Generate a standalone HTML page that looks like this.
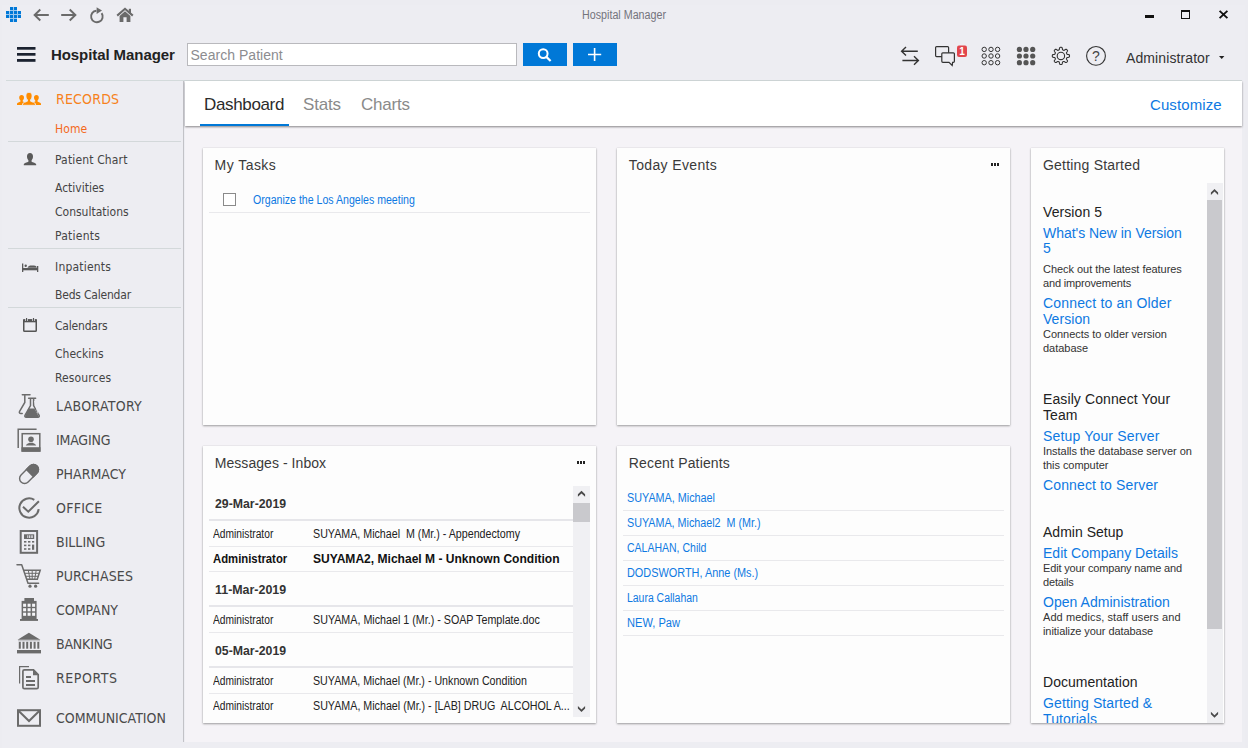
<!DOCTYPE html>
<html><head><meta charset="utf-8"><title>Hospital Manager</title>
<style>
*{box-sizing:border-box;margin:0;padding:0}
html,body{width:1248px;height:748px;overflow:hidden}
body{position:relative;background:#ececf1;font-family:"Liberation Sans",sans-serif;color:#333;font-size:12px}
.abs{position:absolute}
#win{position:absolute;left:2px;top:5px;width:1243px;height:743px;background:#ededf2}
.cap{position:absolute;left:0;width:1248px;top:8px;text-align:center;font-size:12px;color:#777;line-height:14px;letter-spacing:-0.35px}
svg{position:absolute;left:0;top:0;overflow:visible}
#brand{position:absolute;left:51px;top:46px;font-weight:bold;font-size:15px;letter-spacing:-0.08px;line-height:18px;color:#222;white-space:nowrap}
#search{position:absolute;left:187px;top:43px;width:330px;height:23px;border:1px solid #b9b9bd;background:#fff;font-size:14px;line-height:22px;color:#8c8c90;padding-left:2.5px;letter-spacing:.03px}
.btn{position:absolute;top:43px;width:44px;height:23px;background:#0078d7}
#admin{position:absolute;left:1126px;top:49px;font-size:14px;line-height:18px;color:#333;white-space:nowrap;letter-spacing:.1px}
#hline{position:absolute;left:6px;top:80px;width:1236px;height:1px;background:#d3dadb}
#sideborder{position:absolute;left:183px;top:81px;width:1px;height:661px;background:#c2c2c7}
#main{position:absolute;left:185px;top:81px;width:1057px;height:661px;background:#f5f3f7}
#tabs{position:absolute;left:185px;top:81px;width:1057px;height:45px;background:#fff;box-shadow:0 1px 2px rgba(0,0,0,.45)}
.tab{position:absolute;top:95px;font-size:17px;line-height:20px;color:#8a8a8a;white-space:nowrap;letter-spacing:-0.2px}
.card{position:absolute;background:#fdfdfd;box-shadow:0 1px 2px rgba(0,0,0,.35),0 0 1px rgba(0,0,0,.15)}
.ct{position:absolute;font-size:14px;line-height:16px;color:#3a3a3a;white-space:nowrap;letter-spacing:.12px}
.lnk{color:#0e79e2}
.nav{position:absolute;left:55px;font-size:12px;line-height:14px;color:#444;white-space:nowrap;font-family:"DejaVu Sans Condensed","Liberation Sans",sans-serif}
.navb{position:absolute;left:56px;font-size:14px;line-height:16px;color:#4a4a4a;white-space:nowrap;font-family:"DejaVu Sans Condensed","Liberation Sans",sans-serif}
.sep{position:absolute;left:8px;width:173px;height:1px;background:#d3d8da}
.nx{position:absolute;white-space:pre;transform-origin:0 0;font-size:12px;line-height:14px;color:#222}
.b{font-weight:bold}
.hl{position:absolute;height:1px;background:#e9e9ec}
.hl2{position:absolute;height:2px;background:#e6e6ea}
.gh{position:absolute;left:1043px;font-size:14px;line-height:16px;color:#222;white-space:nowrap}
.gl{position:absolute;left:1043px;font-size:14px;line-height:16px;color:#0e79e2;white-space:nowrap}
.gd{position:absolute;left:1043px;font-size:11px;line-height:14px;color:#333;white-space:nowrap}
.sb{position:absolute;width:17px;background:#f0f0f3}
.th{position:absolute;width:17px;background:#c9c9cd}
</style></head><body>
<div id="win"></div>
<div class="nx" style="left:581.8px;top:8px;transform:scaleX(0.8932);color:#74747c">Hospital Manager</div>
<div id="brand">Hospital Manager</div>
<div id="search">Search Patient</div>
<div class="btn" style="left:523px"></div>
<div class="btn" style="left:573px"></div>
<div id="admin">Administrator</div>
<div id="hline"></div>
<div id="sideborder"></div>
<div id="main"></div>
<div id="tabs"></div>
<div class="tab" style="left:204px;color:#2b2b2b;letter-spacing:-0.35px">Dashboard</div>
<div class="tab" style="left:303px">Stats</div>
<div class="tab" style="left:361px">Charts</div>
<div class="tab lnk" style="left:1150px;font-size:15px;letter-spacing:.1px;top:95px">Customize</div>
<div class="abs" style="left:200px;top:124px;width:89px;height:2px;background:#0078d7"></div>
<svg width="1248" height="748" viewBox="0 0 1248 748" style="pointer-events:none">
<!-- app logo -->
<g fill="#0078d7">
<rect x="10" y="7" width="3" height="3"/><rect x="14" y="7" width="3" height="3"/>
<rect x="6" y="11" width="3" height="3"/><rect x="10" y="11" width="3" height="3"/><rect x="14" y="11" width="3" height="3"/><rect x="18" y="11" width="3" height="3"/>
<rect x="6" y="15" width="3" height="3"/><rect x="10" y="15" width="3" height="3"/><rect x="14" y="15" width="3" height="3"/><rect x="18" y="15" width="3" height="3"/>
<rect x="10" y="19" width="3" height="3"/><rect x="14" y="19" width="3" height="3"/>
</g>
<g fill="#9cc8ee"><rect x="9" y="11" width="1" height="7"/><rect x="13" y="7" width="1" height="15"/><rect x="17" y="11" width="1" height="7"/><rect x="10" y="10" width="7" height="1"/><rect x="6" y="14" width="15" height="1"/><rect x="10" y="18" width="7" height="1"/></g>
<!-- nav arrows -->
<g fill="none" stroke="#6a6a6a" stroke-width="1.9">
<path d="M48.8 15H35M40.3 9.5L34.6 15L40.3 20.5"/>
<path d="M61.2 15H75M69.7 9.5L75.4 15L69.7 20.5"/>
<path d="M101.6 13.1A5.8 5.8 0 1 1 96.4 10.7"/>
<path d="M117.2 15.6L125 8.8L132.8 15.6" stroke-width="2.1"/>
</g>
<g fill="#6a6a6a">
<path d="M96.6 7.2L102 10.6L96.6 13.9Z"/>
<rect x="128.8" y="8.8" width="2.2" height="4.5"/>
<path d="M119.6 22V15.9L125 11.2L130.4 15.9V22H126.6V17.2H123.4V22Z"/>
</g>
<!-- window controls -->
<rect x="1145" y="15" width="9" height="3" fill="#111"/>
<rect x="1181.5" y="11" width="8" height="7.5" fill="none" stroke="#111" stroke-width="1"/><rect x="1181" y="10" width="9" height="2" fill="#111"/>
<path d="M1219.6 10.9L1227.4 18.1M1227.4 10.9L1219.6 18.1" stroke="#111" stroke-width="1.9" fill="none"/>
<!-- hamburger -->
<g fill="#1b2230"><rect x="17" y="47" width="18.500" height="2.700"/><rect x="17" y="53" width="18.500" height="2.700"/><rect x="17" y="59" width="18.500" height="2.800"/></g>
<!-- search + plus -->
<g fill="none" stroke="#fff">
<circle cx="543.2" cy="53.6" r="4.4" stroke-width="2"/><path d="M546.4 56.9L550.6 61" stroke-width="2.2"/>
<path d="M588 54.5H601.2M594.6 48V61" stroke-width="1.6"/>
</g>
<!-- swap -->
<g fill="none" stroke="#333" stroke-width="1.4">
<path d="M917.8 51.3H902M906 47L901.6 51.3L906 55.6"/>
<path d="M902.4 60.5H918M914 56.2L918.4 60.5L914 64.8"/>
</g>
<!-- chat -->
<g fill="#ededf2" stroke="#333" stroke-width="1.2">
<rect x="935.6" y="46.6" width="13" height="10" rx="1"/>
<path d="M942.8 52.8H953.4Q954.4 52.8 954.4 53.8V61.3Q954.4 62.3 953.4 62.3H952.6L952.2 65.4L949 62.3H942.8Q941.8 62.3 941.8 61.3V53.8Q941.8 52.8 942.8 52.8Z"/>
</g>
<rect x="957" y="45.5" width="10" height="11.5" rx="2" fill="#e2464c"/>
<text x="962" y="55" font-family="Liberation Sans,sans-serif" font-size="10" font-weight="bold" fill="#fff" text-anchor="middle">1</text>
<!-- grid outline -->
<g fill="none" stroke="#333" stroke-width="1">
<circle cx="984.2" cy="49.4" r="2.2"/><circle cx="991" cy="49.4" r="2.2"/><circle cx="997.6" cy="49.4" r="2.2"/>
<circle cx="984.2" cy="56" r="2.2"/><circle cx="991" cy="56" r="2.2"/><circle cx="997.6" cy="56" r="2.2"/>
<circle cx="984.2" cy="62.7" r="2.2"/><circle cx="991" cy="62.7" r="2.2"/><circle cx="997.6" cy="62.7" r="2.2"/>
</g>
<!-- grid filled -->
<g fill="#555">
<circle cx="1019.4" cy="49.4" r="2.6"/><circle cx="1026" cy="49.4" r="2.6"/><circle cx="1032.7" cy="49.4" r="2.6"/>
<circle cx="1019.4" cy="56" r="2.6"/><circle cx="1026" cy="56" r="2.6"/><circle cx="1032.7" cy="56" r="2.6"/>
<circle cx="1019.4" cy="62.7" r="2.6"/><circle cx="1026" cy="62.7" r="2.6"/><circle cx="1032.7" cy="62.7" r="2.6"/>
</g>
<!-- gear -->
<g fill="none" stroke="#333" stroke-width="1.1">
<circle cx="1060.9" cy="55.9" r="3.7"/>
<path d="M1060.90 47.30L1061.18 47.31L1061.46 47.34L1061.74 47.42L1061.99 47.59L1062.21 47.97L1062.34 48.64L1062.44 49.31L1062.56 49.70L1062.72 49.90L1062.90 50.01L1063.09 50.09L1063.27 50.17L1063.46 50.25L1063.65 50.32L1063.86 50.37L1064.11 50.34L1064.47 50.15L1065.01 49.75L1065.58 49.37L1066.00 49.25L1066.31 49.31L1066.55 49.45L1066.78 49.63L1066.98 49.82L1067.17 50.02L1067.35 50.25L1067.49 50.49L1067.55 50.80L1067.43 51.22L1067.05 51.79L1066.65 52.33L1066.46 52.69L1066.43 52.94L1066.48 53.15L1066.55 53.34L1066.63 53.53L1066.71 53.71L1066.79 53.90L1066.90 54.08L1067.10 54.24L1067.49 54.36L1068.16 54.46L1068.83 54.59L1069.21 54.81L1069.38 55.06L1069.46 55.34L1069.49 55.62L1069.50 55.90L1069.49 56.18L1069.46 56.46L1069.38 56.74L1069.21 56.99L1068.83 57.21L1068.16 57.34L1067.49 57.44L1067.10 57.56L1066.90 57.72L1066.79 57.90L1066.71 58.09L1066.63 58.27L1066.55 58.46L1066.48 58.65L1066.43 58.86L1066.46 59.11L1066.65 59.47L1067.05 60.01L1067.43 60.58L1067.55 61.00L1067.49 61.31L1067.35 61.55L1067.17 61.78L1066.98 61.98L1066.78 62.17L1066.55 62.35L1066.31 62.49L1066.00 62.55L1065.58 62.43L1065.01 62.05L1064.47 61.65L1064.11 61.46L1063.86 61.43L1063.65 61.48L1063.46 61.55L1063.27 61.63L1063.09 61.71L1062.90 61.79L1062.72 61.90L1062.56 62.10L1062.44 62.49L1062.34 63.16L1062.21 63.83L1061.99 64.21L1061.74 64.38L1061.46 64.46L1061.18 64.49L1060.90 64.50L1060.62 64.49L1060.34 64.46L1060.06 64.38L1059.81 64.21L1059.59 63.83L1059.46 63.16L1059.36 62.49L1059.24 62.10L1059.08 61.90L1058.90 61.79L1058.71 61.71L1058.53 61.63L1058.34 61.55L1058.15 61.48L1057.94 61.43L1057.69 61.46L1057.33 61.65L1056.79 62.05L1056.22 62.43L1055.80 62.55L1055.49 62.49L1055.25 62.35L1055.02 62.17L1054.82 61.98L1054.63 61.78L1054.45 61.55L1054.31 61.31L1054.25 61.00L1054.37 60.58L1054.75 60.01L1055.15 59.47L1055.34 59.11L1055.37 58.86L1055.32 58.65L1055.25 58.46L1055.17 58.27L1055.09 58.09L1055.01 57.90L1054.90 57.72L1054.70 57.56L1054.31 57.44L1053.64 57.34L1052.97 57.21L1052.59 56.99L1052.42 56.74L1052.34 56.46L1052.31 56.18L1052.30 55.90L1052.31 55.62L1052.34 55.34L1052.42 55.06L1052.59 54.81L1052.97 54.59L1053.64 54.46L1054.31 54.36L1054.70 54.24L1054.90 54.08L1055.01 53.90L1055.09 53.71L1055.17 53.53L1055.25 53.34L1055.32 53.15L1055.37 52.94L1055.34 52.69L1055.15 52.33L1054.75 51.79L1054.37 51.22L1054.25 50.80L1054.31 50.49L1054.45 50.25L1054.63 50.02L1054.82 49.82L1055.02 49.63L1055.25 49.45L1055.49 49.31L1055.80 49.25L1056.22 49.37L1056.79 49.75L1057.33 50.15L1057.69 50.34L1057.94 50.37L1058.15 50.32L1058.34 50.25L1058.53 50.17L1058.71 50.09L1058.90 50.01L1059.08 49.90L1059.24 49.70L1059.36 49.31L1059.46 48.64L1059.59 47.97L1059.81 47.59L1060.06 47.42L1060.34 47.34L1060.62 47.31Z" stroke-linejoin="round"/>
</g>
<!-- help -->
<circle cx="1096" cy="55.9" r="9.4" fill="none" stroke="#333" stroke-width="1.1"/>
<text x="1096" y="61" font-family="Liberation Sans,sans-serif" font-size="14" fill="#444" text-anchor="middle">?</text>
<!-- caret -->
<path d="M1219 56H1224.4L1221.7 59Z" fill="#222"/>
</svg>
<svg width="190" height="748" viewBox="0 0 190 748">
<!-- records (orange group) -->
<g fill="#ff8c00">
<path d="M21.6 95a2.4 2.6 0 0 1 2.4 2.6c0 1.3-.6 2.3-1.3 2.9v1c1 .5 2.3 .9 2.300 .9V105H17v-1.300c0-1 2.600-1.700 3.500-2.200v-1c-.7-.6-1.300-1.600-1.300-2.900A2.400 2.600 0 0 1 21.600 95Z"/>
<path d="M36.400 95a2.400 2.600 0 0 1 2.400 2.600c0 1.300-.6 2.300-1.300 2.900v1c.9 .5 3.500 1.200 3.500 2.200V105H33v-2.600s1.300-.4 2.300-.9v-1c-.7-.6-1.300-1.600-1.300-2.900A2.400 2.600 0 0 1 36.400 95Z"/>
</g>
<path d="M29 92.300c1.900 0 3.100 1.500 3.100 3.600 0 1.700-.7 3.100-1.500 3.800v1.500c1.200 .7 4.900 1.300 4.900 2.900V105.300H22.500v-1.200c0-1.600 3.700-2.200 4.900-2.900v-1.500c-.8-.7-1.500-2.100-1.500-3.800 0-2.100 1.200-3.600 3.100-3.600Z" fill="#ff8c00" stroke="#ededf2" stroke-width=".9"/>
<!-- patient -->
<path d="M30 153c1.900 0 3 1.500 3 3.500 0 1.700-.7 3-1.400 3.700v1.500c1.200 .7 4.600 1.300 4.600 2.900V165.300H23.800v-.7c0-1.600 3.400-2.200 4.600-2.900v-1.500c-.7-.7-1.400-2-1.400-3.700 0-2 1.100-3.500 3-3.500Z" fill="#5a5a5a"/>
<!-- bed -->
<g fill="#5a5a5a">
<rect x="22" y="263.500" width="1.300" height="8.500"/><rect x="37" y="266" width="1.300" height="6"/>
<rect x="22" y="268" width="16" height="2.300"/>
<circle cx="25.700" cy="265.800" r="1.200"/>
<path d="M27.500 267.800c.5-1.600 2.200-2.200 4-2.200h2.500c1.500 0 2.600 .8 2.800 2.200Z"/>
</g>
<!-- calendar -->
<g fill="none" stroke="#555" stroke-width="1.500">
<rect x="23.750" y="320" width="12.500" height="11.200" rx=".8"/>
</g>
<g fill="#555"><rect x="23" y="319.300" width="14" height="3"/><rect x="26" y="318" width="1.200" height="3"/><rect x="32.900" y="318" width="1.200" height="3"/></g>
<g fill="#ededf2"><rect x="25.300" y="318.600" width=".7" height="2.400"/><rect x="27.200" y="318.600" width=".7" height="2.400"/><rect x="32.200" y="318.600" width=".7" height="2.400"/><rect x="34.100" y="318.600" width=".7" height="2.400"/></g>
<!-- laboratory -->
<g fill="none" stroke="#6b6b6b" stroke-width="1.500" stroke-linecap="round">
<path d="M22.300 394.700H30"/>
<path d="M24.800 395.500V402.500L19.600 411.300c-.7 1.300 0 2.100 1.300 2.100H22.200"/>
<path d="M28.600 398.300H35.600"/>
<path d="M30.500 399V405.500L25 415.300c-.5 1 0 1.900 1.100 1.900H38c1.100 0 1.600-.9 1.100-1.900L33.600 405.500V399"/>
</g>
<path d="M28.300 408.600H34.400L38.700 416.200c.2 .5 0 .8-.5 .8H25.700c-.5 0-.7-.3-.5-.8Z" fill="#6b6b6b"/>
<path d="M34.400 401L38 413.500" stroke="#ededf2" stroke-width=".8" fill="none"/>
<!-- imaging -->
<g fill="none" stroke="#6b6b6b" stroke-width="1.500">
<path d="M18.200 448V429.200H36.600"/>
<rect x="22.200" y="433.700" width="17.600" height="17.300"/>
</g>
<g fill="#6b6b6b"><rect x="21.500" y="447.200" width="19" height="4.500"/>
<circle cx="31" cy="439.200" r="2.800"/><path d="M25.800 445.600c.6-1.700 2.500-2.200 3.600-2.900h3.200c1.100 .7 3 1.200 3.600 2.900Z"/></g>
<!-- pharmacy -->
<g transform="rotate(-45 29.05 474)">
<rect x="17.750" y="469" width="22.600" height="10" rx="5" fill="none" stroke="#6b6b6b" stroke-width="1.400"/>
<path d="M29.600 468.300H35.350a5.700 5.700 0 0 1 0 11.400H29.600Z" fill="#6b6b6b"/>
</g>
<!-- office -->
<g fill="none" stroke="#6b6b6b" stroke-width="2">
<path d="M34.300 499.800A9.700 9.700 0 1 0 38.700 509.200"/>
<path d="M23 506.800L28.300 511.700L38.900 501.200"/>
</g>
<!-- billing -->
<rect x="20.700" y="531" width="16.400" height="21.800" fill="none" stroke="#6b6b6b" stroke-width="2"/>
<g fill="#6b6b6b"><rect x="24" y="534.300" width="10.200" height="4.700"/>
<rect x="24" y="541" width="2.400" height="1.600"/><rect x="28" y="541" width="2.400" height="1.600"/><rect x="32" y="541" width="2.200" height="1.600"/>
<rect x="24" y="544.600" width="2.400" height="1.600"/><rect x="28" y="544.600" width="2.400" height="1.600"/><rect x="32" y="544.600" width="2.200" height="5.200"/>
<rect x="24" y="548.200" width="2.400" height="1.600"/><rect x="28" y="548.200" width="2.400" height="1.600"/></g>
<g fill="#d8d8dc"><rect x="27" y="535.300" width=".8" height="2.700"/><rect x="28.700" y="535.300" width="1.600" height="2.700"/><rect x="31.200" y="535.300" width="1.600" height="2.700"/></g>
<!-- purchases -->
<g fill="none" stroke="#6b6b6b" stroke-width="1.500">
<path d="M17 564.800H21.700L28 583.200H38.600" stroke-linecap="round" stroke-linejoin="round"/>
<path d="M23.700 570.300H40.200L37.300 579.300H26.700"/>
<path d="M24.700 573.300H39.200M25.700 576.300H38.200M28.300 570.300L30 579.300M32.200 570.300V579.300M36.200 570.300L34.700 579.300" stroke-width="1"/>
</g>
<circle cx="30" cy="586.200" r="1.600" fill="#6b6b6b"/><circle cx="35.600" cy="586.200" r="1.600" fill="#6b6b6b"/>
<!-- company -->
<g fill="#6b6b6b"><rect x="24.400" y="598" width="9.600" height="3.500"/><rect x="21.600" y="600.900" width="15" height="18.500"/><rect x="20" y="619" width="18" height="1.900"/></g>
<g fill="#f4f4f7">
<rect x="23.100" y="603.700" width="3" height="3.100"/><rect x="27.600" y="603.700" width="3" height="3.100"/><rect x="32.100" y="603.700" width="3" height="3.100"/>
<rect x="23.100" y="608.200" width="3" height="3.100"/><rect x="27.600" y="608.200" width="3" height="3.100"/><rect x="32.100" y="608.200" width="3" height="3.100"/>
<rect x="23.100" y="612.700" width="3" height="3.100"/><rect x="27.600" y="612.700" width="3" height="3.100"/><rect x="32.100" y="612.700" width="3" height="3.100"/>
</g>
<!-- banking -->
<g fill="#6b6b6b">
<path d="M28.900 632.800L40.400 639.800H17.600Z"/>
<rect x="18.800" y="641.800" width="2" height="6.900"/><rect x="22.500" y="641.800" width="2" height="6.900"/><rect x="26.200" y="641.800" width="2" height="6.900"/><rect x="29.900" y="641.800" width="2" height="6.900"/><rect x="33.600" y="641.800" width="2" height="6.900"/><rect x="37.300" y="641.800" width="2" height="6.900"/>
<rect x="17" y="650" width="24" height="3.400"/>
</g>
<rect x="18" y="640.300" width="22" height=".9" fill="#b5b5b9"/>
<!-- reports -->
<g fill="none" stroke="#6b6b6b">
<path d="M19.600 683.600V666.700H29" stroke-width="1.200"/>
<path d="M24.400 669.800H33.500L38.200 674.500V687.200c0 .9-.6 1.500-1.500 1.500H24.400c-.9 0-1.500-.6-1.500-1.500V671.300c0-.9 .6-1.500 1.500-1.500Z" stroke-width="1.700"/>
<path d="M26 677H31M26 681H35M26 685H35" stroke-width="1.900"/>
</g>
<path d="M33 669.500L38.700 675.200H33Z" fill="#6b6b6b"/>
<!-- communication -->
<g fill="none" stroke="#6b6b6b" stroke-width="2">
<rect x="18" y="710.200" width="22" height="15.600"/>
<path d="M18.500 710.700L29 721L39.500 710.700"/>
</g>
</svg>
<div class="navb" style="top:91px;color:#f7821b;letter-spacing:0.2px">RECORDS</div>
<div class="nav" style="top:122px;color:#f4691c;letter-spacing:0.1px">Home</div>
<div class="sep" style="top:141px"></div>
<div class="nav" style="top:153px;letter-spacing:0.15px">Patient Chart</div>
<div class="nav" style="top:181px">Activities</div>
<div class="nav" style="top:205px">Consultations</div>
<div class="nav" style="top:229px;letter-spacing:0.25px">Patients</div>
<div class="sep" style="top:248px"></div>
<div class="nav" style="top:260px;letter-spacing:0.2px">Inpatients</div>
<div class="nav" style="top:288px;letter-spacing:-0.2px">Beds Calendar</div>
<div class="sep" style="top:307px"></div>
<div class="nav" style="top:319px;letter-spacing:-0.2px">Calendars</div>
<div class="nav" style="top:347px">Checkins</div>
<div class="nav" style="top:371px;letter-spacing:0.12px">Resources</div>
<div class="navb" style="top:398px;letter-spacing:0.3px">LABORATORY</div>
<div class="navb" style="top:432px;letter-spacing:-0.2px">IMAGING</div>
<div class="navb" style="top:466px">PHARMACY</div>
<div class="navb" style="top:500px;letter-spacing:0.25px">OFFICE</div>
<div class="navb" style="top:534px">BILLING</div>
<div class="navb" style="top:568px;letter-spacing:0.15px">PURCHASES</div>
<div class="navb" style="top:602px">COMPANY</div>
<div class="navb" style="top:636px;letter-spacing:-0.2px">BANKING</div>
<div class="navb" style="top:670px;letter-spacing:0.55px">REPORTS</div>
<div class="navb" style="top:710px">COMMUNICATION</div>
<div class="card" style="left:203px;top:148px;width:393px;height:277px"></div>
<div class="card" style="left:617px;top:148px;width:393px;height:277px"></div>
<div class="card" style="left:1031px;top:148px;width:193px;height:575px"></div>
<div class="card" style="left:203px;top:446px;width:393px;height:277px"></div>
<div class="card" style="left:617px;top:446px;width:393px;height:277px"></div>
<div class="ct" style="left:214.6px;top:157px;letter-spacing:0.44px">My Tasks</div>
<div class="ct" style="left:628.8px;top:157px;letter-spacing:0.36px">Today Events</div>
<div class="ct" style="left:1043px;top:157px;letter-spacing:0.2px">Getting Started</div>
<div class="ct" style="left:214.7px;top:455px;letter-spacing:0.06px">Messages - Inbox</div>
<div class="ct" style="left:628.8px;top:455px;letter-spacing:0.16px">Recent Patients</div>
<div class="abs" style="left:991px;top:163px;width:2px;height:3px;background:#222"></div><div class="abs" style="left:994px;top:163px;width:2px;height:3px;background:#222"></div><div class="abs" style="left:997px;top:163px;width:2px;height:3px;background:#222"></div>
<div class="abs" style="left:577px;top:461px;width:2px;height:3px;background:#222"></div><div class="abs" style="left:580px;top:461px;width:2px;height:3px;background:#222"></div><div class="abs" style="left:583px;top:461px;width:2px;height:3px;background:#222"></div>
<div class="abs" style="left:223px;top:193px;width:13px;height:13px;border:1px solid #8a8a8a;background:#fff"></div>
<div class="nx" style="left:252.5px;top:193px;transform:scaleX(0.8820);color:#0e79e2">Organize the Los Angeles meeting</div>
<div class="hl" style="left:209px;top:212px;width:381px"></div>
<div class="nx b" style="left:215px;top:497px;transform:scaleX(1.0249);color:#333">29-Mar-2019</div>
<div class="hl2" style="left:209px;top:519px;width:364px"></div>
<div class="nx" style="left:213px;top:527px;transform:scaleX(0.8530);color:#222">Administrator</div>
<div class="nx" style="left:313.2px;top:527px;transform:scaleX(0.8902);color:#222">SUYAMA, Michael  M (Mr.) - Appendectomy</div>
<div class="hl" style="left:209px;top:546px;width:364px"></div>
<div class="nx b" style="left:213px;top:552px;transform:scaleX(0.9431);color:#111">Administrator</div>
<div class="nx b" style="left:313.2px;top:552px;transform:scaleX(1.0042);color:#111">SUYAMA2, Michael M - Unknown Condition</div>
<div class="hl" style="left:209px;top:571px;width:364px"></div>
<div class="nx b" style="left:215px;top:583px;transform:scaleX(1.0347);color:#333">11-Mar-2019</div>
<div class="hl2" style="left:209px;top:605px;width:364px"></div>
<div class="nx" style="left:213px;top:613px;transform:scaleX(0.8530);color:#222">Administrator</div>
<div class="nx" style="left:313.2px;top:613px;transform:scaleX(0.8926);color:#222">SUYAMA, Michael 1 (Mr.) - SOAP Template.doc</div>
<div class="hl" style="left:209px;top:632px;width:364px"></div>
<div class="nx b" style="left:215px;top:644px;transform:scaleX(1.0249);color:#333">05-Mar-2019</div>
<div class="hl2" style="left:209px;top:666px;width:364px"></div>
<div class="nx" style="left:213px;top:674px;transform:scaleX(0.8530);color:#222">Administrator</div>
<div class="nx" style="left:313.2px;top:674px;transform:scaleX(0.8897);color:#222">SUYAMA, Michael (Mr.) - Unknown Condition</div>
<div class="hl" style="left:209px;top:693px;width:364px"></div>
<div class="nx" style="left:213px;top:699px;transform:scaleX(0.8530);color:#222">Administrator</div>
<div class="nx" style="left:313.2px;top:699px;transform:scaleX(0.8914);color:#222">SUYAMA, Michael (Mr.) - [LAB] DRUG  ALCOHOL A...</div>
<div class="sb" style="left:573px;top:486px;height:231px"></div><div class="th" style="left:573px;top:503px;height:19px"></div>
<div class="nx" style="left:627.2px;top:491px;transform:scaleX(0.8997);color:#0e79e2">SUYAMA, Michael</div>
<div class="hl" style="left:623px;top:510px;width:381px"></div>
<div class="nx" style="left:627.2px;top:516px;transform:scaleX(0.8958);color:#0e79e2">SUYAMA, Michael2  M (Mr.)</div>
<div class="hl" style="left:623px;top:535px;width:381px"></div>
<div class="nx" style="left:627.2px;top:541px;transform:scaleX(0.8754);color:#0e79e2">CALAHAN, Child</div>
<div class="hl" style="left:623px;top:560px;width:381px"></div>
<div class="nx" style="left:627.2px;top:566px;transform:scaleX(0.9082);color:#0e79e2">DODSWORTH, Anne (Ms.)</div>
<div class="hl" style="left:623px;top:585px;width:381px"></div>
<div class="nx" style="left:627.2px;top:591px;transform:scaleX(0.8699);color:#0e79e2">Laura Callahan</div>
<div class="hl" style="left:623px;top:610px;width:381px"></div>
<div class="nx" style="left:627.2px;top:616px;transform:scaleX(0.9242);color:#0e79e2">NEW, Paw</div>
<div class="hl" style="left:623px;top:635px;width:381px"></div>
<div class="sb" style="left:1207px;top:183px;height:540px;width:16px"></div><div class="th" style="left:1207px;top:200px;height:429px;width:15px"></div>
<div class="gh" style="top:204px;letter-spacing:0.081px">Version 5</div>
<div class="gl" style="top:225px;letter-spacing:-0.039px">What's New in Version</div>
<div class="gl" style="top:240px">5</div>
<div class="gd" style="top:262px;letter-spacing:-0.042px">Check out the latest features</div>
<div class="gd" style="top:276px;letter-spacing:-0.155px">and improvements</div>
<div class="gl" style="top:295px;letter-spacing:0.174px">Connect to an Older</div>
<div class="gl" style="top:311px;letter-spacing:0.058px">Version</div>
<div class="gd" style="top:327px;letter-spacing:-0.037px">Connects to older version</div>
<div class="gd" style="top:341px;letter-spacing:-0.020px">database</div>
<div class="gh" style="top:391px;letter-spacing:0.100px">Easily Connect Your</div>
<div class="gh" style="top:407px;letter-spacing:0.066px">Team</div>
<div class="gl" style="top:428px;letter-spacing:0.169px">Setup Your Server</div>
<div class="gd" style="top:444px;letter-spacing:-0.032px">Installs the database server on</div>
<div class="gd" style="top:458px;letter-spacing:-0.056px">this computer</div>
<div class="gl" style="top:477px;letter-spacing:0.133px">Connect to Server</div>
<div class="gh" style="top:524px;letter-spacing:0.013px">Admin Setup</div>
<div class="gl" style="top:545px;letter-spacing:0.019px">Edit Company Details</div>
<div class="gd" style="top:561px;letter-spacing:-0.157px">Edit your company name and</div>
<div class="gd" style="top:575px;letter-spacing:-0.156px">details</div>
<div class="gl" style="top:594px;letter-spacing:0.039px">Open Administration</div>
<div class="gd" style="top:610px;letter-spacing:0.077px">Add medics, staff users and</div>
<div class="gd" style="top:624px;letter-spacing:-0.075px">initialize your database</div>
<div class="gh" style="top:674px;letter-spacing:0.026px">Documentation</div>
<div class="gl" style="top:695px;letter-spacing:0.107px">Getting Started &amp;</div>
<div class="abs" style="left:1043px;top:711px;width:160px;height:12px;overflow:hidden"><div class="gl" style="left:0;top:0;letter-spacing:.1px">Tutorials</div></div>
<svg width="1248" height="748" viewBox="0 0 1248 748" style="pointer-events:none"><g fill="#4a4a4a"><path d="M577.9 494.3L581.5 490.8L585.1 494.3V496.8L581.5 493.40000000000003L577.9 496.8Z"/><path d="M577.9 708.5L581.5 712L585.1 708.5V706L581.5 709.4L577.9 706Z"/><path d="M1210.9 192.5L1214.5 189L1218.1 192.5V195L1214.5 191.6L1210.9 195Z"/><path d="M1210.9 714.3L1214.5 717.8L1218.1 714.3V711.8L1214.5 715.1999999999999L1210.9 711.8Z"/></g></svg>
</body></html>
